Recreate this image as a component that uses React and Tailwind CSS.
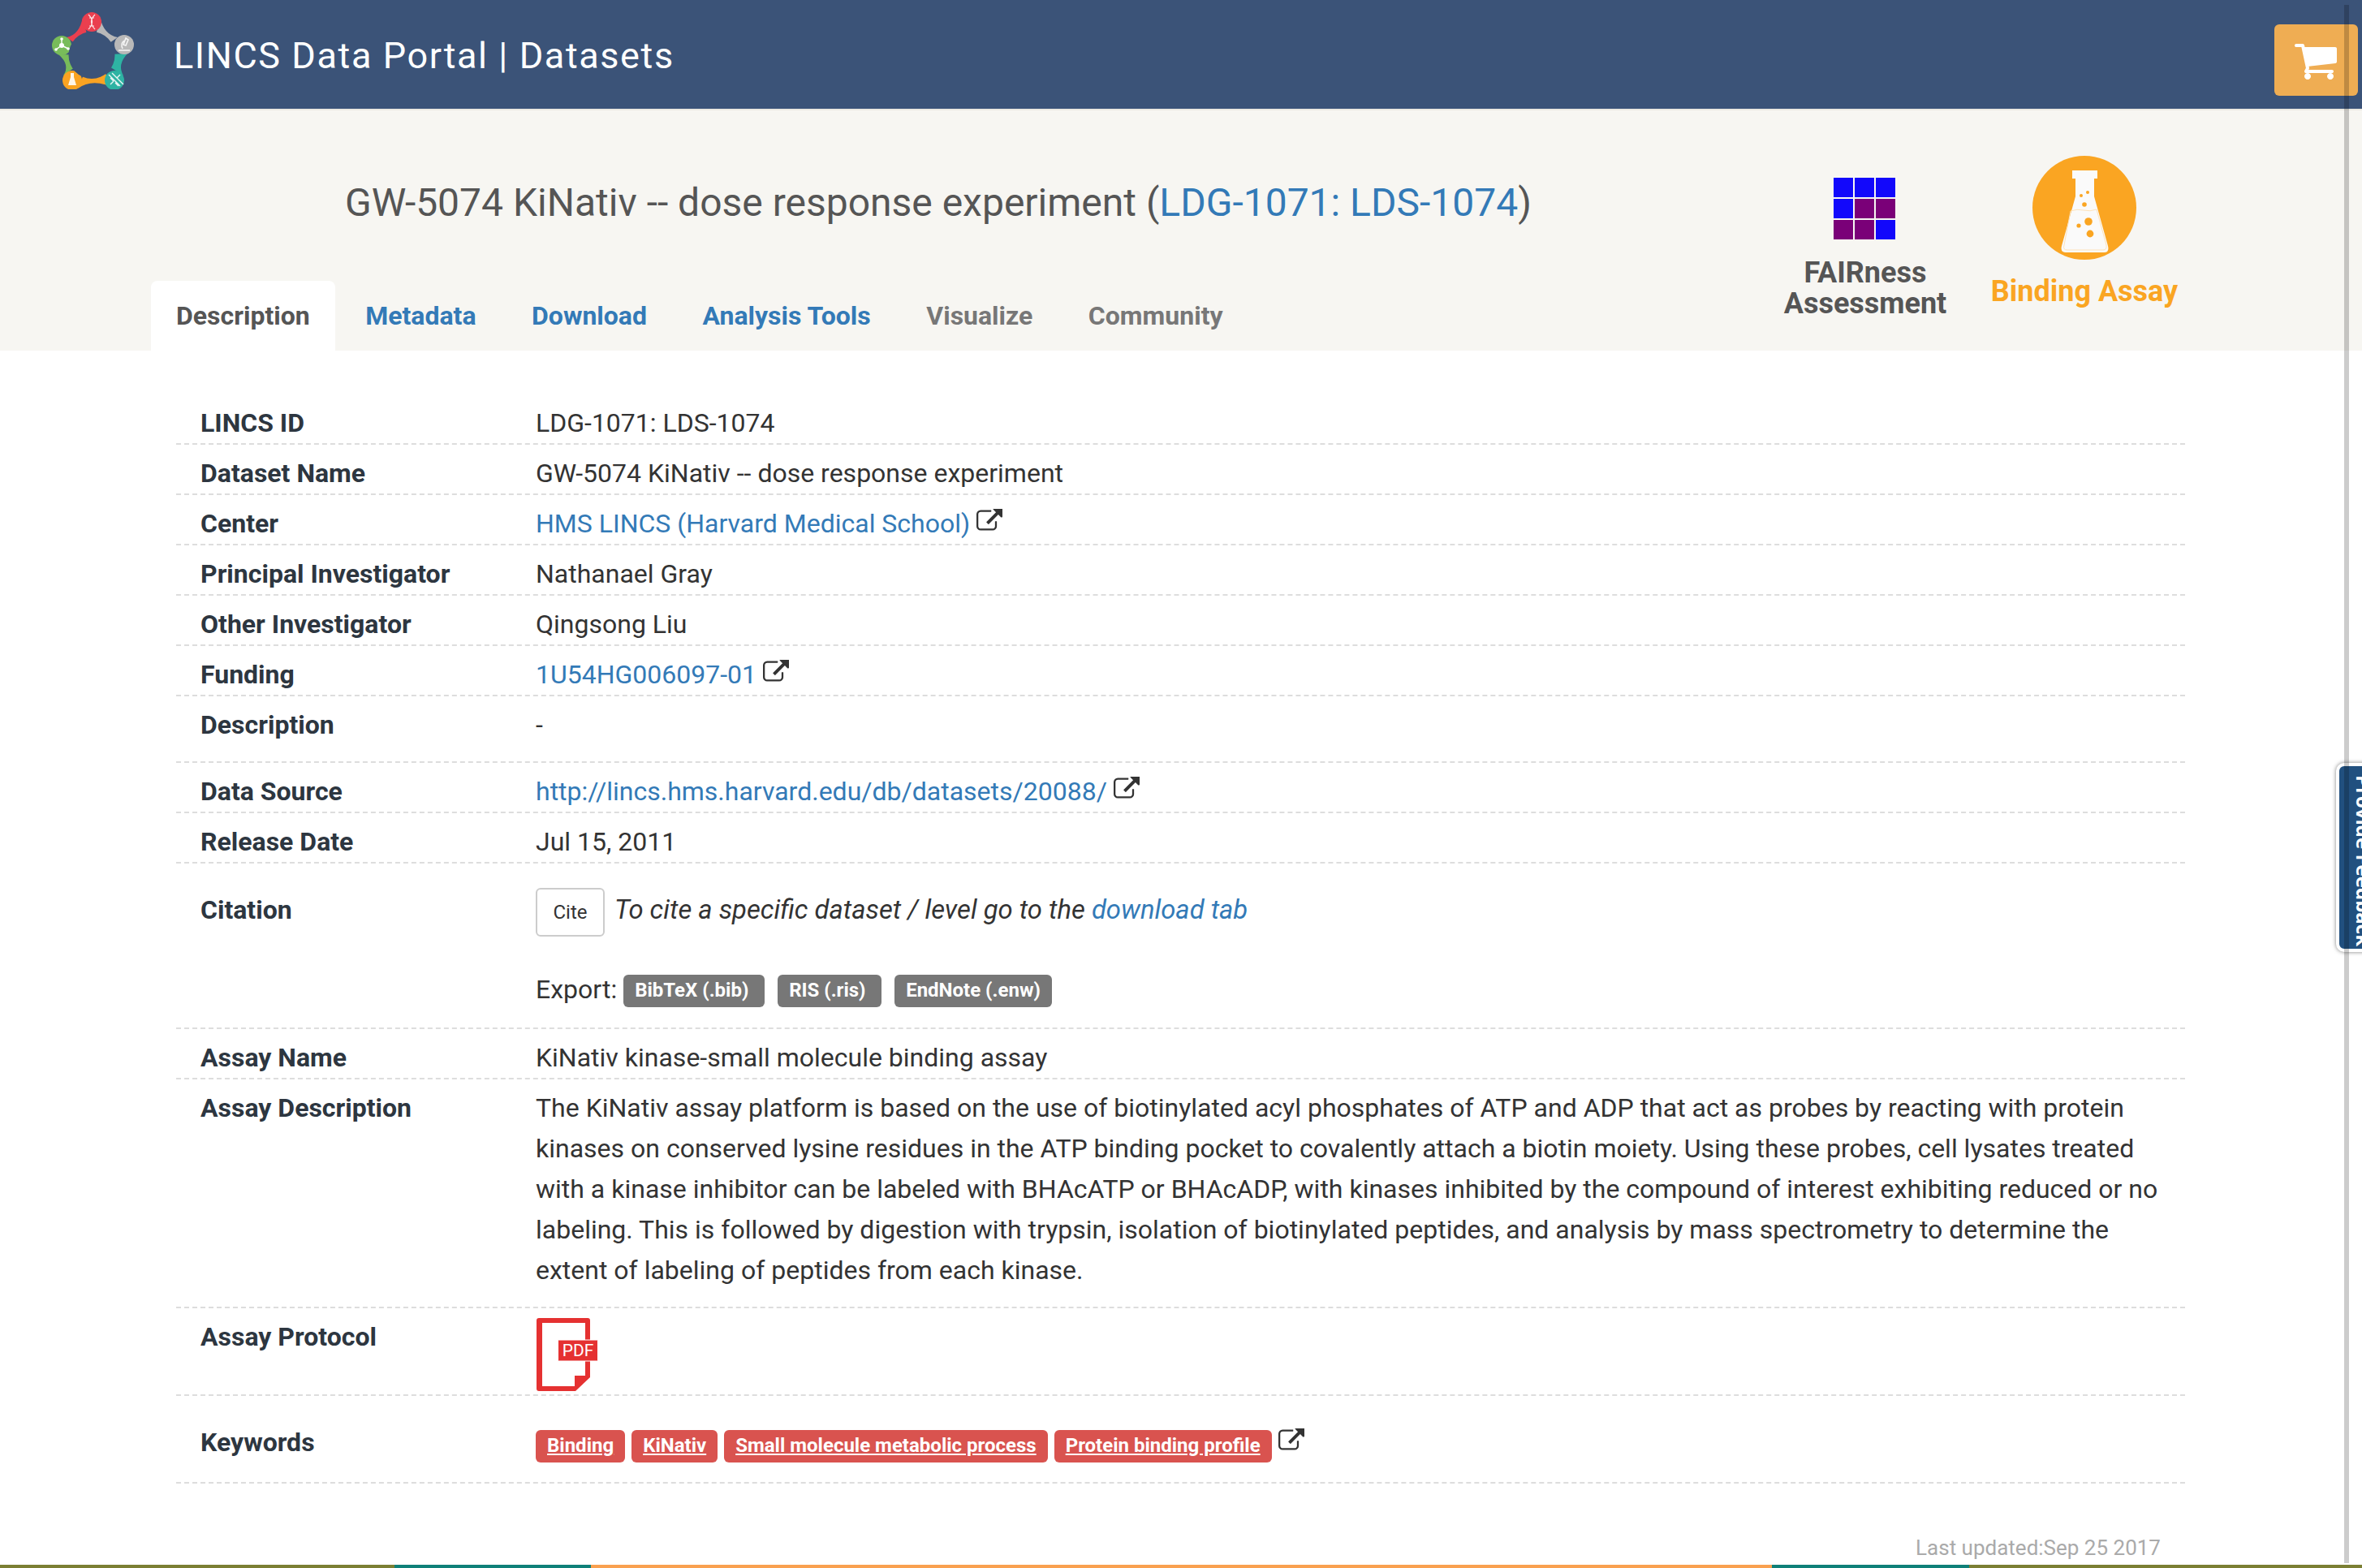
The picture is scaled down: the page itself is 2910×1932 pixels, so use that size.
const EXT_PATH =
  "M1408 928v320q0 119-84.5 203.5t-203.5 84.5h-832q-119 0-203.5-84.5t-84.5-203.5v-832q0-119 84.5-203.5t203.5-84.5h704q14 0 23 9t9 23v64q0 14-9 23t-23 9h-704q-66 0-113 47t-47 113v832q0 66 47 113t113 47h832q66 0 113-47t47-113v-320q0-14 9-23t23-9h64q14 0 23 9t9 23zm384-864v512q0 26-19 45t-45 19-45-19l-176-176-652 652q-10 10-23 10t-23-10l-114-114q-10-10-10-23t10-23l652-652-176-176q-19-19-19-45t19-45 45-19h512q26 0 45 19t19 45z";
const CART_PATH =
  "M704 1536q0 52-38 90t-90 38-90-38-38-90 38-90 90-38 90 38 38 90zm896 0q0 52-38 90t-90 38-90-38-38-90 38-90 90-38 90 38 38 90zm128-1088v512q0 24-16.5 42.5t-40.5 21.5l-1044 122q13 60 13 70 0 16-24 64h920q26 0 45 19t19 45-19 45-45 19h-1024q-26 0-45-19t-19-45q0-11 8-31.5t16-36 21.5-40 15.5-29.5l-177-823h-204q-26 0-45-19t-19-45 19-45 45-19h256q16 0 28.5 6.5t19.5 15.5 13 24.5 8 26 5.5 29.5 4.5 26h1201q26 0 45 19t19 45z";

const ExtIcon = ({ className = "" }) => (
  <svg viewBox="0 64 1792 1536" className={`inline-block w-[32px] h-[28px] fill-[#333] align-[1px] ${className}`}>
    <path d={EXT_PATH} />
  </svg>
);

const Logo = () => (
  <svg viewBox="0 0 110 100" className="w-[110px] h-[100px]">
    {/* connectors between the five nodes */}
    <path d="M42 11 Q38 33 22 36 L53 58 Z" fill="#ea3f4f" />
    <path d="M63 11 Q68 33 85 36 L53 58 Z" fill="#b9b9b9" />
    <path d="M97 56 Q84 70 92 83 L53 58 Z" fill="#2eb3a3" />
    <path d="M84 100 Q55 85 36 99 L53 58 Z" fill="#faa322" />
    <path d="M18 83 Q27 70 12 57 L53 58 Z" fill="#78bc5a" />
    <circle cx="53" cy="17" r="12" fill="#ea3f4f" />
    <circle cx="93" cy="45" r="12" fill="#b9b9b9" />
    <circle cx="81" cy="89" r="12" fill="#2eb3a3" />
    <circle cx="29" cy="89" r="12" fill="#faa322" />
    <circle cx="16" cy="46" r="12" fill="#78bc5a" />
    <ellipse cx="53" cy="58" rx="28.5" ry="29" fill="#3b5378" />
    {/* dna */}
    <path d="M49 8 Q58 17 49 26 M57 8 Q48 17 57 26 M50 12h6M50 22h6" stroke="#fff" strokeWidth="1.2" fill="none" opacity="0.85" />
    {/* microscope */}
    <path d="M86 52h14M91 50q-3-6 2-10M95 37l3 2-3 7-3-1z" stroke="#fff" strokeWidth="1.6" fill="none" opacity="0.85" />
    {/* strand */}
    <path d="M74 82l14 14M78 80l14 14M88 82l-4 4M80 90l-4 4M82 92l4 4M76 86l4 4" stroke="#fff" strokeWidth="1.4" opacity="0.9" />
    {/* flask */}
    <path d="M27 80h4v5l3 10h-10l3-10z" fill="#fff" opacity="0.9" />
    {/* molecule */}
    <path d="M16 38v8M16 46l-7 5M16 46l8 4" stroke="#fff" strokeWidth="1.4" />
    <circle cx="16" cy="46" r="3" fill="#fff" />
    <circle cx="16" cy="38" r="1.8" fill="#fff" />
    <circle cx="9" cy="51" r="1.8" fill="#fff" />
    <circle cx="24" cy="50" r="1.8" fill="#fff" />
  </svg>
);

const Flask = () => (
  <svg viewBox="0 0 128 128" className="w-[128px] h-[128px]">
    <circle cx="64" cy="64" r="64" fill="#faa522" />
    <path
      d="M49 18h31v10h-4v22l17 61q2 8-5 8H41q-7 0-5-8l17-61V28h-4z"
      fill="#fafafa"
    />
    <path d="M47 68q8-3 16-1t16-1l12 44q1 6-4 6H43q-6 0-4-6z" fill="none" stroke="#fde3bb" strokeWidth="1" />
    <circle cx="60" cy="49" r="2" fill="#faa522" />
    <circle cx="68" cy="45" r="2" fill="#faa522" />
    <circle cx="64" cy="60" r="2.8" fill="#faa522" />
    <circle cx="69" cy="81" r="4.8" fill="#faa522" />
    <circle cx="57" cy="86" r="2.6" fill="#faa522" />
    <circle cx="71" cy="96" r="4.4" fill="#faa522" />
  </svg>
);

const FAIR_COLORS = ["#1208fb", "#1208fb", "#1208fb", "#1208fb", "#7a0078", "#7a0078", "#7a0078", "#7a0078", "#1208fb"];

const PdfIcon = () => (
  <svg viewBox="0 0 76 90" className="w-[76px] h-[90px]">
    <path d="M3 0h60q3 0 3 3v70L48 90H3q-3 0-3-3V3q0-3 3-3z" fill="#e53131" />
    <path d="M7 6h53v65H47v13H7z" fill="#fff" />
    <rect x="26.5" y="27" width="49" height="26" rx="1" fill="#e53131" stroke="#fff" strokeWidth="1" />
    <text x="51" y="47" textAnchor="middle" fontFamily="Roboto, sans-serif" fontSize="21" fill="#fff">PDF</text>
  </svg>
);

const Row = ({ label, labelClass = "", className = "", children }) => (
  <div className={`flex border-b-2 border-dashed border-[#ddd] pt-[10px] ${className}`}>
    <div className={`w-[443px] shrink-0 pl-[30px] font-bold text-[#2d3640] ${labelClass}`}>{label}</div>
    <div className="flex-1 min-w-0">{children}</div>
  </div>
);

const A = ({ children, className = "" }) => (
  <a href="#" className={`text-[#337ab7] ${className}`}>{children}</a>
);

const Label = ({ children, className = "" }) => (
  <span className={`inline-flex items-center h-[40px] rounded-[6px] px-[14px] pb-[2px] text-[24px] leading-none font-bold text-white ${className}`}>
    {children}
  </span>
);

export default function App() {
  return (
    <div className="relative h-[1932px] w-full overflow-hidden flex flex-col bg-white font-['Roboto',sans-serif] text-[32px] leading-[50px] text-[#333]">
      <header className="h-[136px] shrink-0 flex items-center bg-[#3b5378] border-b-2 border-[#ece9e1]">
        <div className="ml-[60px] mt-[-14px]">
          <Logo />
        </div>
        <h1 className="ml-[44px] mt-[4px] text-[45px] leading-[50px] font-normal tracking-[1.6px] text-white">
          LINCS Data Portal | Datasets
        </h1>
        <button className="ml-auto mr-[5px] mt-[14px] w-[103px] h-[88px] rounded-[6px] bg-[#efad53] flex items-center justify-center">
          <svg viewBox="0 128 1792 1536" className="w-[56px] h-[48px] fill-white ml-[-2px]">
            <path d={CART_PATH} />
          </svg>
        </button>
      </header>

      <section className="h-[296px] shrink-0 flex bg-[#f7f6f2]">
        <div className="flex-1 flex flex-col pl-[186px]">
          <h2 className="pl-[239px] pt-[84px] text-[48px] leading-[60px] font-normal text-[#555]">
            GW-5074 KiNativ -- dose response experiment (<A>LDG-1071: LDS-1074</A>)
          </h2>
          <nav className="mt-auto flex font-bold">
            <a href="#" className="h-[86px] px-[31px] pt-[18px] mr-[6.5px] rounded-t-[8px] bg-white text-[#555]">Description</a>
            <a href="#" className="h-[86px] px-[31px] pt-[18px] mr-[6.5px] text-[#337ab7]">Metadata</a>
            <a href="#" className="h-[86px] px-[31px] pt-[18px] mr-[6.5px] text-[#337ab7]">Download</a>
            <a href="#" className="h-[86px] px-[31px] pt-[18px] mr-[6.5px] text-[#337ab7]">Analysis Tools</a>
            <a href="#" className="h-[86px] px-[31px] pt-[18px] mr-[6.5px] text-[#777]">Visualize</a>
            <a href="#" className="h-[86px] px-[31px] pt-[18px] mr-[6.5px] text-[#777]">Community</a>
          </nav>
        </div>
        <div className="flex gap-[40px] pr-[222px] text-[36px] leading-[38px] font-bold text-center">
          <div className="w-[220px] pt-[83px] flex flex-col items-center text-[#555]">
            <div className="grid grid-cols-3 gap-[2px] w-[76px] mr-[2px]">
              {FAIR_COLORS.map((c, i) => (
                <div key={i} className="h-[24px]" style={{ backgroundColor: c }} />
              ))}
            </div>
            <div className="mt-[22px]">FAIRness Assessment</div>
          </div>
          <div className="w-[240px] pt-[56px] flex flex-col items-center text-[#faa522]">
            <Flask />
            <div className="mt-[20px] whitespace-nowrap">Binding Assay</div>
          </div>
        </div>
      </section>

      <main className="ml-[217px] mt-[54px] w-[2475px]">
        <Row label="LINCS ID">LDG-1071: LDS-1074</Row>
        <Row label="Dataset Name">GW-5074 KiNativ -- dose response experiment</Row>
        <Row label="Center">
          <A>HMS LINCS (Harvard Medical School)</A> <ExtIcon />
        </Row>
        <Row label="Principal Investigator">Nathanael Gray</Row>
        <Row label="Other Investigator">Qingsong Liu</Row>
        <Row label="Funding">
          <A>1U54HG006097-01</A> <ExtIcon />
        </Row>
        <Row label="Description" className="h-[82px]">-</Row>
        <Row label="Data Source">
          <A>http://lincs.hms.harvard.edu/db/datasets/20088/</A> <ExtIcon />
        </Row>
        <Row label="Release Date">Jul 15, 2011</Row>
        <Row label="Citation" labelClass="pt-[2px]" className="h-[204px] !pt-[30px]">
          <div className="flex items-start">
            <button className="w-[85px] h-[60px] rounded-[6px] border-2 border-[#ccc] bg-white text-[24px] leading-none">Cite</button>
            <span className="ml-[12px] mt-[2px] italic text-[32.8px]">
              To cite a specific dataset / level go to the <A>download tab</A>
            </span>
          </div>
          <div className="mt-[40px] flex items-center h-[50px]">
            <span>Export:</span>
            <Label className="ml-[8px] mt-[4px] w-[174px] bg-[#777]">BibTeX (.bib)</Label>
            <Label className="ml-[16px] mt-[4px] w-[128px] bg-[#777]">RIS (.ris)</Label>
            <Label className="ml-[16px] mt-[4px] bg-[#777]">EndNote (.enw)</Label>
          </div>
        </Row>
        <Row label="Assay Name">KiNativ kinase-small molecule binding assay</Row>
        <Row label="Assay Description" className="h-[282px]">
          The KiNativ assay platform is based on the use of biotinylated acyl phosphates of ATP and ADP that act as probes by reacting with protein kinases on conserved lysine residues in the ATP binding pocket to covalently attach a biotin moiety. Using these probes, cell lysates treated with a kinase inhibitor can be labeled with BHAcATP or BHAcADP, with kinases inhibited by the compound of interest exhibiting reduced or no labeling. This is followed by digestion with trypsin, isolation of biotinylated peptides, and analysis by mass spectrometry to determine the extent of labeling of peptides from each kinase.
        </Row>
        <Row label="Assay Protocol" className="h-[108px]">
          <div className="mt-[2px] ml-[1px]">
            <PdfIcon />
          </div>
        </Row>
        <Row label="Keywords" labelClass="pt-[22px]" className="h-[108px]">
          <div className="flex items-start gap-[8px] pt-[32px]">
            <Label className="bg-[#d9534f] underline">Binding</Label>
            <Label className="bg-[#d9534f] underline">KiNativ</Label>
            <Label className="bg-[#d9534f] underline">Small molecule metabolic process</Label>
            <Label className="bg-[#d9534f] underline">Protein binding profile</Label>
            <ExtIcon className="mt-[-2px]" />
          </div>
        </Row>
        <div className="mt-[64px] pr-[30px] text-right text-[26px] leading-[30px] text-[#aaa]">Last updated:Sep 25 2017</div>
      </main>

      <div className="mt-auto h-[4px] shrink-0 flex">
        <div className="w-[486px] bg-[#7b7f33]" />
        <div className="w-[242px] bg-[#0f8078]" />
        <div className="w-[1455px] bg-[#f9a04f]" />
        <div className="w-[243px] bg-[#0f8078]" />
        <div className="flex-1 bg-[#7b7f33]" />
      </div>

      {/* feedback tab, hangs off the right edge */}
      <div className="absolute right-[-40px] top-[940px] w-[72px] h-[233px] rounded-l-[10px] border-4 border-white bg-[#21507f] shadow-[0_0_5px_rgba(0,0,0,0.5)] overflow-hidden">
        <span className="absolute left-[5px] top-[11px] [writing-mode:vertical-rl] whitespace-nowrap font-['Open_Sans',sans-serif] text-[24px] leading-[50px] font-bold text-white">
          Provide Feedback
        </span>
      </div>

      {/* overlay scrollbar */}
      <div className="absolute top-[6px] bottom-[6px] right-[16px] w-[6px] bg-black/20" />
    </div>
  );
}
